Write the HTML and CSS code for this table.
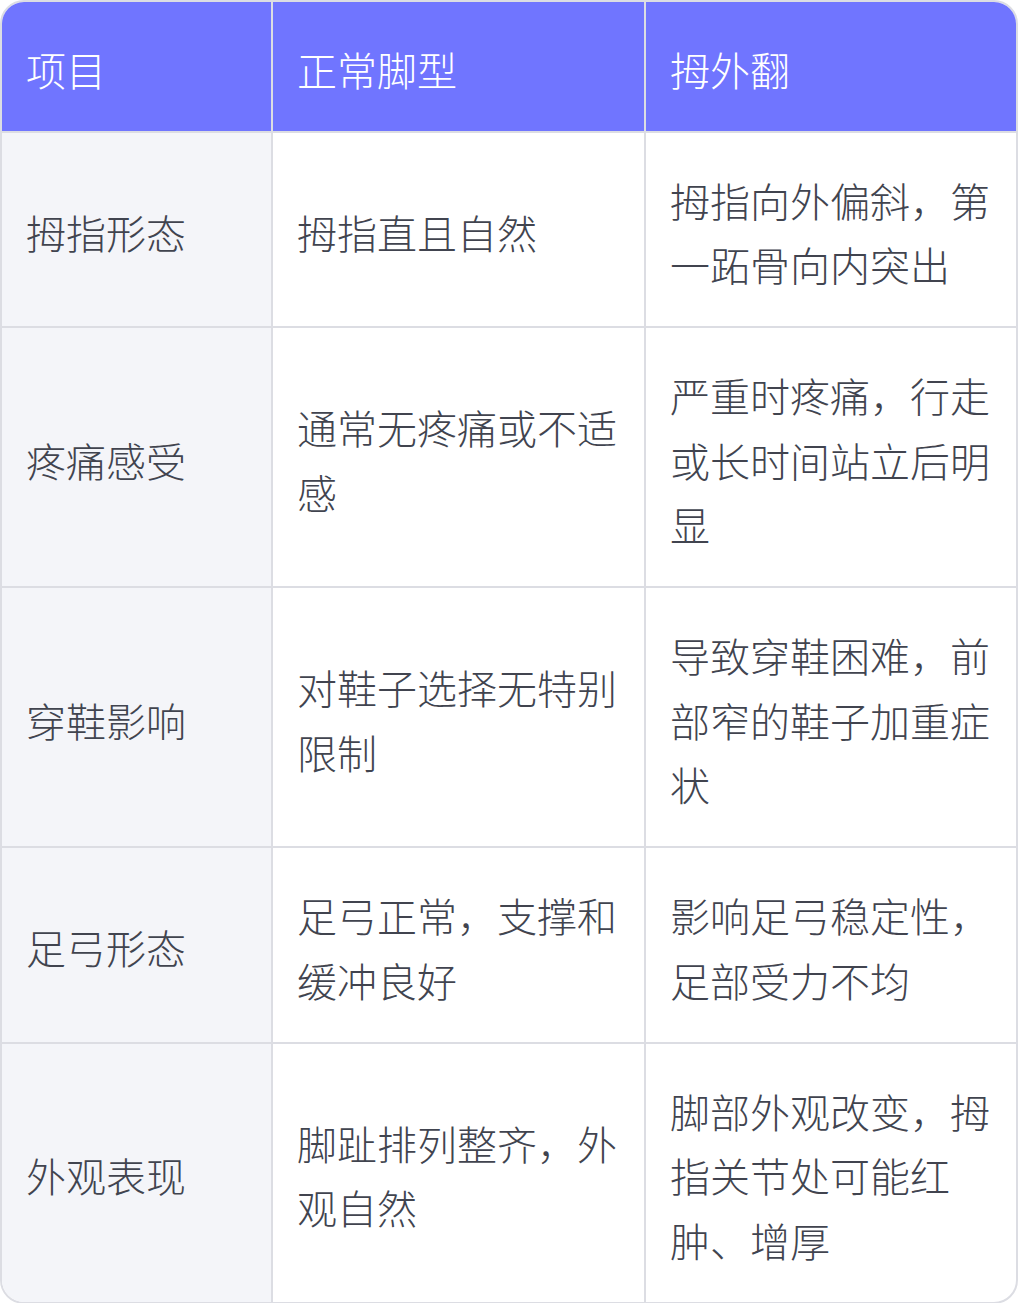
FILE: index.html
```html
<!DOCTYPE html>
<html lang="zh-CN">
<head>
<meta charset="utf-8">
<title>拇外翻对比</title>
<link rel="stylesheet" href="styles.css">
</head>
<body>
<div class="card">
  <table class="cmp">
    <colgroup>
      <col class="c1"><col class="c2"><col class="c3">
    </colgroup>
    <thead>
      <tr><th>项目</th><th>正常脚型</th><th>拇外翻</th></tr>
    </thead>
    <tbody>
      <tr><td class="key">拇指形态</td><td>拇指直且自然</td><td>拇指向外偏斜，第一跖骨向内突出</td></tr>
      <tr><td class="key">疼痛感受</td><td>通常无疼痛或不适感</td><td>严重时疼痛，行走或长时间站立后明显</td></tr>
      <tr><td class="key">穿鞋影响</td><td>对鞋子选择无特别限制</td><td>导致穿鞋困难，前部窄的鞋子加重症状</td></tr>
      <tr><td class="key">足弓形态</td><td>足弓正常，支撑和缓冲良好</td><td>影响足弓稳定性，足部受力不均</td></tr>
      <tr><td class="key">外观表现</td><td>脚趾排列整齐，外观自然</td><td>脚部外观改变，拇指关节处可能红肿、增厚</td></tr>
    </tbody>
  </table>
</div>
</body>
</html>
```

FILE: styles.css
```css
html, body {
  margin: 0;
  padding: 0;
  background: #ffffff;
}
.card {
  width: 1018px;
  box-sizing: border-box;
  border: 2px solid #dcdde3;
  border-radius: 24px;
  overflow: hidden;
  background: #ffffff;
}
.cmp {
  width: 100%;
  border-collapse: separate;
  border-spacing: 0;
  table-layout: fixed;
  font-family: "Noto Sans CJK SC", "Noto Sans", sans-serif;
  font-size: 40px;
  font-weight: 300;
  line-height: 64.5px;
  color: #41444f;
}
.c1 { width: 271px; }
.c2 { width: 373px; }
.c3 { width: auto; }
.cmp th,
.cmp td {
  text-align: left;
  vertical-align: middle;
  padding: 35px 24px 29.5px;
  border-right: 2px solid #dcdde3;
  border-bottom: 2px solid #dcdde3;
  font-weight: 300;
  word-break: break-all;
}
.cmp th:last-child,
.cmp td:last-child {
  border-right: none;
}
.cmp tbody tr:last-child td {
  border-bottom: none;
}
.cmp th {
  background: #7075ff;
  color: #ffffff;
  padding-top: 35px;
  padding-bottom: 29px;
}
.cmp td.key {
  background: #f4f5f9;
}
```
